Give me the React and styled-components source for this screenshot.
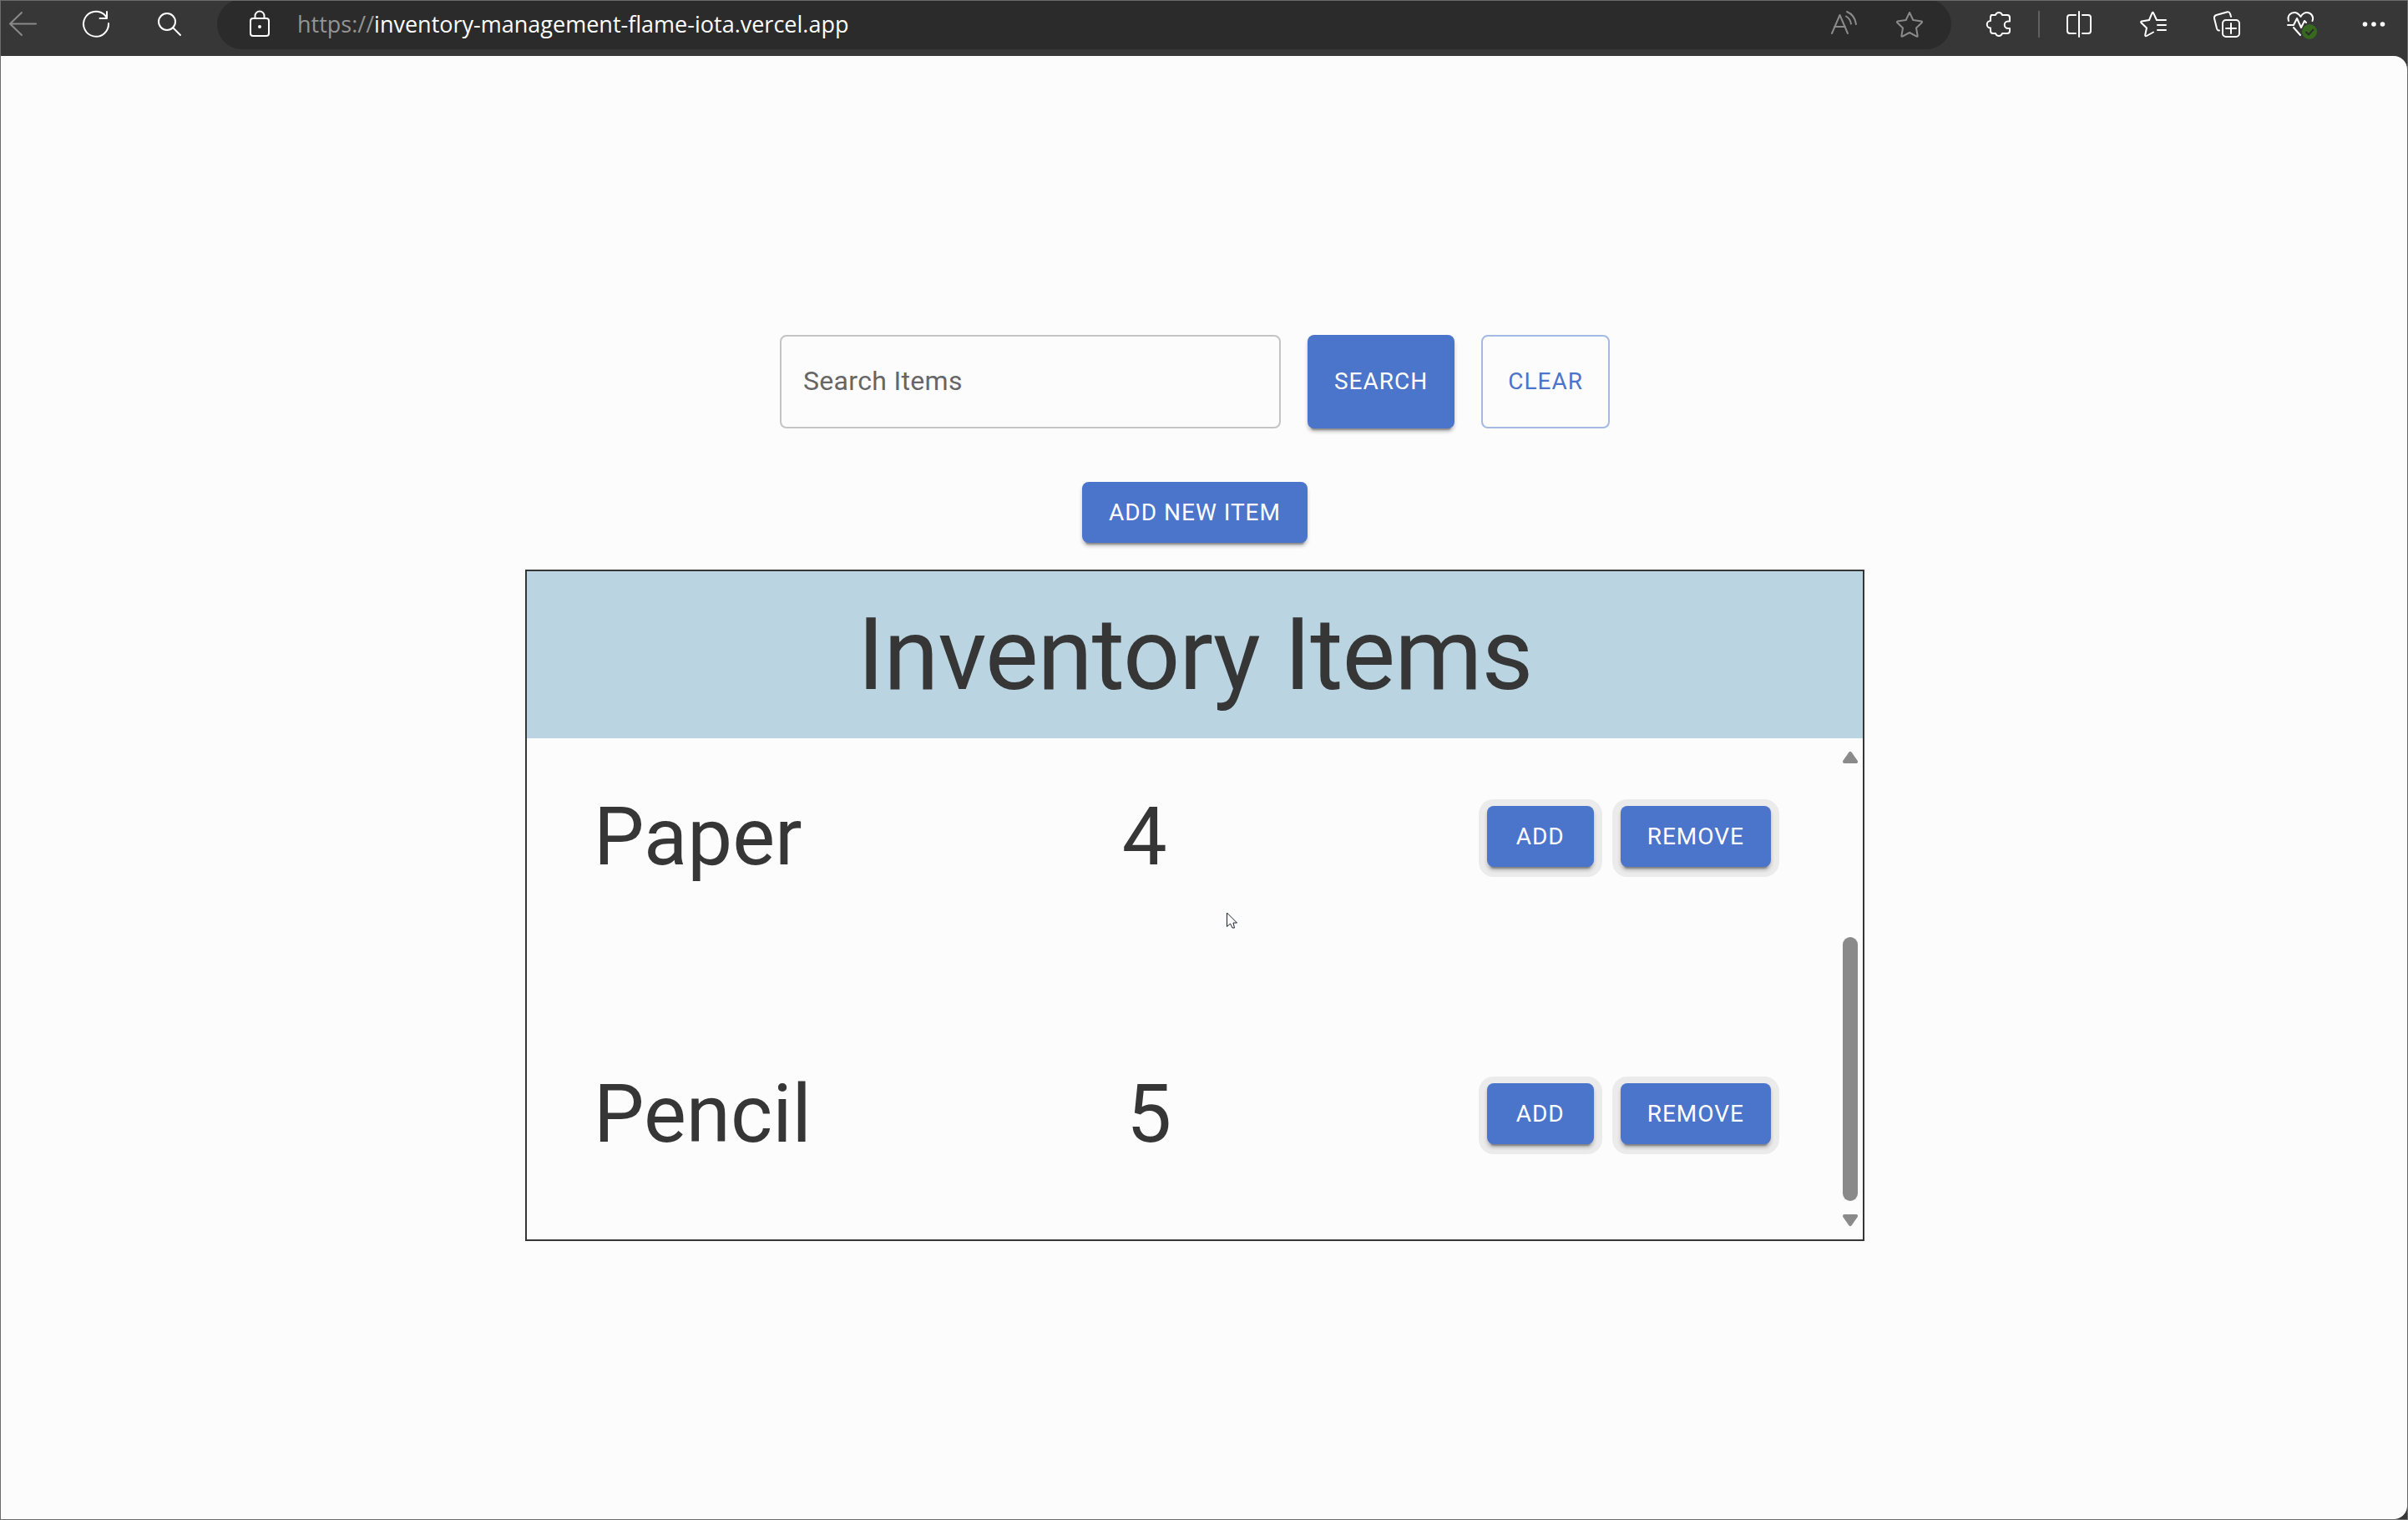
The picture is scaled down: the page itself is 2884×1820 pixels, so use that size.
import React from "react";
import styled, { createGlobalStyle } from "styled-components";

const GlobalStyle = createGlobalStyle`
  *, *::before, *::after { box-sizing: border-box; }
  body { margin: 0; background: #373737; font-family: Roboto, "Liberation Sans", sans-serif; }
  button, input { font: inherit; margin: 0; }
`;

const Frame = styled.div`
  display: flex;
  flex-direction: column;
  min-height: 100vh;
  border: 1px solid #6b6b6b;
  background: #373737;
`;

const Toolbar = styled.header`
  display: flex;
  align-items: flex-end;
  height: 66px;
  padding: 0 24px 8px 10px;
  overflow: hidden;
`;

const ToolGroup = styled.div`
  display: flex;
  align-items: center;
  flex: none;
  height: 60px;
  gap: 56px;
`;

const ExtensionGroup = styled(ToolGroup)`
  gap: 32px;
  margin: 0 56px 0 40px;
`;

const IconButton = styled.button`
  display: block;
  flex: none;
  width: 32px;
  height: 32px;
  padding: 0;
  border: 0;
  background: none;
  color: ${(p) => (p.$dim ? "#8a8a8a" : "#ffffff")};

  svg {
    display: block;
    overflow: visible;
    fill: none;
    stroke: currentColor;
    stroke-width: 2;
    stroke-linecap: round;
    stroke-linejoin: round;
  }
`;

const Divider = styled.span`
  width: 2px;
  height: 32px;
  background: #606060;
`;

const AddressBar = styled.div`
  display: flex;
  align-items: center;
  flex: 1;
  height: 60px;
  margin-left: 41px;
  padding: 0 34px;
  border-radius: 30px;
  background: #2b2b2b;
`;

const Url = styled.a`
  flex: 1;
  margin-left: 30px;
  color: #ffffff;
  font-family: "Open Sans", "Noto Sans", sans-serif;
  font-size: 27px;
  line-height: 40px;
  text-decoration: none;
`;

const Scheme = styled.span`
  color: #949494;
`;

const AddressActions = styled(ToolGroup)`
  gap: 48px;
`;

const Page = styled.main`
  display: flex;
  flex: 1;
  flex-direction: column;
  align-items: center;
  justify-content: center;
  padding-right: 22px;
  border-radius: 0 16px 16px 0;
  background: #fcfcfc;
  color: #363636;
`;

const SearchForm = styled.form`
  display: flex;
  gap: 32px;
  margin-bottom: 64px;
`;

const SearchField = styled.input`
  width: 600px;
  height: 112px;
  padding: 0 26px 2px;
  border: 2px solid #c4c4c4;
  border-radius: 8px;
  outline: 0;
  background: transparent;
  color: #363636;
  font-size: 32px;
  letter-spacing: 0.01em;

  &::placeholder {
    color: #666666;
    opacity: 1;
  }
`;

const Button = styled.button`
  min-width: 128px;
  padding: 12px 32px;
  border: 0;
  border-radius: 8px;
  background: #4b74cb;
  box-shadow: 0 6px 2px -4px rgba(0, 0, 0, 0.3), 0 4px 4px rgba(0, 0, 0, 0.22);
  color: #ffffff;
  font-size: 28px;
  font-weight: 400;
  line-height: 49px;
  letter-spacing: 1px;
  text-transform: uppercase;
`;

const OutlinedButton = styled(Button)`
  padding: 12px 30px;
  border: 2px solid #a5b9e5;
  background: transparent;
  box-shadow: none;
  color: #4b74cb;
`;

const RowButton = styled(Button)`
  box-shadow: 0 6px 2px -4px rgba(0, 0, 0, 0.3), 0 4px 4px rgba(0, 0, 0, 0.22),
    0 2px 0 10px #ebebeb;
`;

const Panel = styled.section`
  width: 1604px;
  max-width: 100%;
  margin-top: 32px;
  border: 2px solid #363636;
`;

const PanelTitle = styled.h2`
  display: flex;
  align-items: center;
  justify-content: center;
  height: 200px;
  margin: 0;
  background: #bad5e1;
  font-size: 120px;
  font-weight: 400;
  line-height: 144px;
  letter-spacing: -1px;
`;

const ListViewport = styled.div`
  display: flex;
  height: 600px;
  overflow: hidden;
`;

const ItemList = styled.ul`
  display: flex;
  flex: 1;
  flex-direction: column;
  justify-content: flex-end;
  gap: 32px;
  margin: 0;
  padding: 0;
  list-style: none;
`;

const ItemRow = styled.li`
  display: flex;
  align-items: center;
  justify-content: space-between;
  flex: none;
  height: 300px;
  padding: 0 80px;
  font-size: 96px;
  line-height: 112px;
`;

const RowActions = styled.div`
  display: flex;
  gap: 32px;
`;

const Scrollbar = styled.div`
  display: flex;
  flex-direction: column;
  align-items: center;
  gap: 16px;
  width: 30px;
  padding: 16px 0;

  svg {
    display: block;
    fill: #8a8a8a;
    stroke: #8a8a8a;
    stroke-width: 4;
    stroke-linejoin: round;
  }
`;

const Thumb = styled.div`
  width: 18px;
  height: 316px;
  margin-top: auto;
  border-radius: 9px;
  background: #8a8a8a;
`;

const Pointer = styled.svg`
  position: absolute;
  left: 1469px;
  top: 1092px;
`;

const paths = {
  back: <path d="M1 15.500H32M15 2L1 15.500L15 29" />,
  reload: (
    <path d="M31 15A15 15 0 1 1 26 4.500L29 8M29 1V9H20.500" />
  ),
  search: (
    <>
      <circle cx="13" cy="13" r="10" />
      <path d="M20 20L29 29" />
    </>
  ),
  lock: (
    <>
      <rect x="6" y="9" width="22" height="21" rx="3" />
      <path d="M11.500 9V6A5.500 5.500 0 0 1 22.500 6V9" />
      <circle cx="17" cy="19" r="1" />
    </>
  ),
  readAloud: (
    <path d="M3 27L12.500 5L22 27M6 19H19M20 6.500Q25 9.500 26 15.500M21 1Q30.500 5 32 16" />
  ),
  star: (
    <path d="M16 2L20.300 11L30.500 12.500Q31.500 13 30.800 14L24 20.500L25.700 30Q25.500 31.200 24.500 30.700L16 26L7.500 30.700Q6.300 31.200 6.400 30L8 20.500L1.200 14Q0.600 13 1.500 12.500L11.700 11Z" />
  ),
  puzzle: (
    <path d="M8 5H13A4.200 4.200 0 0 1 21 5H27Q30 5 30 8V12.500H28A4 4 0 0 0 28 21H30V24Q30 27 27 27H21A4.200 4.200 0 0 1 13 27H10Q7 27 7 24V20.500A4.200 4.200 0 0 1 7 12V8Q7 5 9 5" />
  ),
  split: (
    <path d="M11 5H4Q1 5 1 8V24Q1 27 4 27H11M19 5H26Q29 5 29 8V24Q29 27 26 27H19M15 1V31" />
  ),
  favorites: (
    <path d="M31 11H20L16 2.300Q15.300 1.200 14.600 2.300L11 11L2 12.500Q0.500 13 1.500 14.200L8 20.500L6.200 29Q6.200 31 8 30L16 25.500M21 17H31M21 23H31" />
  ),
  collections: (
    <>
      <path d="M7 23.500Q5 24 4 21L1 9Q0.500 6 3.500 5L16 1.500Q19 0.800 20 3.500L21 7" />
      <rect x="11" y="11" width="20" height="20" rx="4" />
      <path d="M21 15V27M15 21H27" />
    </>
  ),
  health: (
    <>
      <path d="M2 12C0 5 5 2 9 2C12 2 14 3.500 16.500 7C18.500 3.500 21 2 24 2C29 2 32.500 7 30.500 12M1 17H8L12 9L17 20L21 12L23 14M8 20L16 29" />
      <circle cx="27" cy="25" r="9" fill="#37691f" stroke="none" />
      <path d="M23 25.500L26 28.500L31.500 22.500" stroke="#2a2a2a" />
    </>
  ),
  more: (
    <g fill="currentColor" stroke="none">
      <circle cx="5.500" cy="16" r="2.800" />
      <circle cx="16" cy="16" r="2.800" />
      <circle cx="26.500" cy="16" r="2.800" />
    </g>
  ),
};

function Tool({ icon, label, dim }) {
  return (
    <IconButton type="button" aria-label={label} $dim={dim}>
      <svg width="32" height="32" viewBox="0 0 32 32" aria-hidden="true">
        {paths[icon]}
      </svg>
    </IconButton>
  );
}

const items = [
  { name: "Paper", quantity: 4 },
  { name: "Pencil", quantity: 5 },
];

export default function App() {
  return (
    <Frame>
      <GlobalStyle />
      <Toolbar>
        <ToolGroup>
          <Tool icon="back" label="Back" dim />
          <Tool icon="reload" label="Refresh" />
          <Tool icon="search" label="Search the web" />
        </ToolGroup>
        <AddressBar>
          <Tool icon="lock" label="Site information" />
          <Url href="https://inventory-management-flame-iota.vercel.app">
            <Scheme>https://</Scheme>inventory-management-flame-iota.vercel.app
          </Url>
          <AddressActions>
            <Tool icon="readAloud" label="Read aloud" dim />
            <Tool icon="star" label="Add to favorites" dim />
          </AddressActions>
        </AddressBar>
        <ExtensionGroup>
          <Tool icon="puzzle" label="Extensions" />
          <Divider />
          <Tool icon="split" label="Split screen" />
        </ExtensionGroup>
        <ToolGroup>
          <Tool icon="favorites" label="Favorites" />
          <Tool icon="collections" label="Collections" />
          <Tool icon="health" label="Browser essentials" />
          <Tool icon="more" label="More" />
        </ToolGroup>
      </Toolbar>
      <Page>
        <SearchForm onSubmit={(e) => e.preventDefault()}>
          <SearchField aria-label="Search Items" placeholder="Search Items" />
          <Button type="submit">Search</Button>
          <OutlinedButton type="reset">Clear</OutlinedButton>
        </SearchForm>
        <Button type="button">Add New Item</Button>
        <Panel>
          <PanelTitle>Inventory Items</PanelTitle>
          <ListViewport>
            <ItemList>
              {items.map((item) => (
                <ItemRow key={item.name}>
                  <span>{item.name}</span>
                  <span>{item.quantity}</span>
                  <RowActions>
                    <RowButton type="button">Add</RowButton>
                    <RowButton type="button">Remove</RowButton>
                  </RowActions>
                </ItemRow>
              ))}
            </ItemList>
            <Scrollbar aria-hidden="true">
              <svg width="18" height="14" viewBox="0 0 18 14">
                <path d="M9 2L16 12H2Z" />
              </svg>
              <Thumb />
              <svg width="18" height="14" viewBox="0 0 18 14">
                <path d="M9 12L16 2H2Z" />
              </svg>
            </Scrollbar>
          </ListViewport>
        </Panel>
      </Page>
      <Pointer width="14" height="21" viewBox="0 0 14 21" aria-hidden="true">
        <path
          d="M0.500 1V17.500L4.500 14L7 19H9.500L8 13H12.500Z"
          fill="#ffffff"
          stroke="#1b2233"
          strokeWidth="1"
        />
      </Pointer>
    </Frame>
  );
}
